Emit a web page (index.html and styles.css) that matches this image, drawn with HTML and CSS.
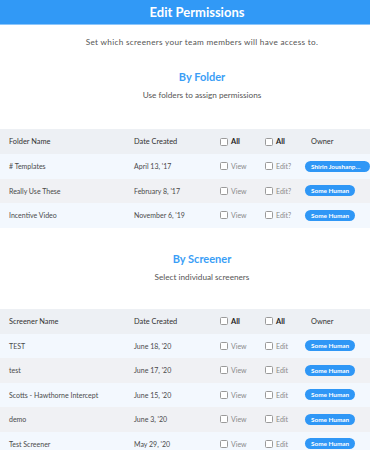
FILE: index.html
```html
<!DOCTYPE html>
<html lang="en">
<head>
  <meta charset="UTF-8" />
  <title>Edit Permissions</title>
  <link rel="stylesheet" href="styles.css">
</head>
<body>
  <div class="topbar">
    <h1>Edit Permissions</h1>
  </div>

  <p class="intro">Set which screeners your team members will have access to.</p>

  <div class="section">
    <h2>By Folder</h2>
    <p class="hint">Use folders to assign permissions</p>
  </div>

  <div class="table folders">
    <div class="row head">
      <span>Folder Name</span>
      <span>Date Created</span>
      <label class="check"><i class="box"></i>All</label>
      <label class="check"><i class="box"></i>All</label>
      <span class="owner-head">Owner</span>
    </div>
    <div class="row">
      <span># Templates</span>
      <span>April 13, '17</span>
      <label class="check"><i class="box"></i>View</label>
      <label class="check"><i class="box"></i>Edit?</label>
      <span class="pill">Shirin Joushanpour</span>
    </div>
    <div class="row">
      <span>Really Use These</span>
      <span>February 8, '17</span>
      <label class="check"><i class="box"></i>View</label>
      <label class="check"><i class="box"></i>Edit?</label>
      <span class="pill">Some Human</span>
    </div>
    <div class="row">
      <span>Incentive Video</span>
      <span>November 6, '19</span>
      <label class="check"><i class="box"></i>View</label>
      <label class="check"><i class="box"></i>Edit?</label>
      <span class="pill">Some Human</span>
    </div>
  </div>

  <div class="section second">
    <h2>By Screener</h2>
    <p class="hint">Select individual screeners</p>
  </div>

  <div class="table screeners">
    <div class="row head">
      <span>Screener Name</span>
      <span>Date Created</span>
      <label class="check"><i class="box"></i>All</label>
      <label class="check"><i class="box"></i>All</label>
      <span class="owner-head">Owner</span>
    </div>
    <div class="row">
      <span>TEST</span>
      <span>June 18, '20</span>
      <label class="check"><i class="box"></i>View</label>
      <label class="check"><i class="box"></i>Edit</label>
      <span class="pill">Some Human</span>
    </div>
    <div class="row">
      <span>test</span>
      <span>June 17, '20</span>
      <label class="check"><i class="box"></i>View</label>
      <label class="check"><i class="box"></i>Edit</label>
      <span class="pill">Some Human</span>
    </div>
    <div class="row">
      <span>Scotts - Hawthorne Intercept</span>
      <span>June 15, '20</span>
      <label class="check"><i class="box"></i>View</label>
      <label class="check"><i class="box"></i>Edit</label>
      <span class="pill">Some Human</span>
    </div>
    <div class="row">
      <span>demo</span>
      <span>June 3, '20</span>
      <label class="check"><i class="box"></i>View</label>
      <label class="check"><i class="box"></i>Edit</label>
      <span class="pill">Some Human</span>
    </div>
    <div class="row">
      <span>Test Screener</span>
      <span>May 29, '20</span>
      <label class="check"><i class="box"></i>View</label>
      <label class="check"><i class="box"></i>Edit</label>
      <span class="pill">Some Human</span>
    </div>
  </div>
</body>
</html>
```

FILE: styles.css
```css
body {
  margin: 0;
  padding: 0;
  background: #fff;
  color: #444;
  font-family: Lato, 'Noto Sans', sans-serif;
  overflow: hidden;
}
.topbar {
  height: 24px;
  background: #3199f6;
  border-bottom: 1px solid #8cc6fb;
  display: flex;
  align-items: center;
  justify-content: center;
  padding-left: 24px;
}
.topbar h1 {
  margin: 0;
  color: #fff;
  font-size: 13px;
  font-weight: 700;
}
.intro {
  margin: 12px 0 0;
  padding-left: 34px;
  text-align: center;
  font-size: 8.2px;
  letter-spacing: 0.3px;
  color: #555;
}
.section {
  padding-left: 34px;
  text-align: center;
  margin-top: 23px;
}
.section h2 {
  margin: 0;
  color: #3a9ef6;
  font-size: 11px;
  font-weight: 700;
}
.hint {
  margin: 7px 0 0;
  font-size: 8.2px;
  color: #555;
}
.table {
  margin-top: 29px;
}
.section.second {
  margin-top: 24px;
}
.table.screeners {
  margin-top: 27px;
}
.row {
  display: grid;
  grid-template-columns: 125px 86px 45px 40px 1fr;
  align-items: center;
  height: 24.5px;
  padding-left: 9px;
  font-size: 7px;
  color: #4a4a4a;
  background: #f3f8fe;
}
.row:nth-child(odd) {
  background: #f0f1f4;
}
.row.head {
  height: 25px;
  background: #edf0f4;
  color: #333;
  font-size: 7.4px;
}
.check {
  display: flex;
  align-items: center;
  gap: 3px;
  color: #8a8a8a;
}
.head .check {
  color: #222;
  font-weight: 700;
}
.box {
  display: inline-block;
  width: 6px;
  height: 6px;
  border: 1px solid #9a9a9a;
  border-radius: 1.5px;
  background: #fff;
}
.owner-head {
  padding-left: 6px;
}
.pill {
  justify-self: start;
  max-width: 53px;
  padding: 0 6px;
  height: 11px;
  line-height: 11px;
  border-radius: 6px;
  background: #2f97f6;
  color: #fff;
  font-size: 6.4px;
  font-weight: 700;
  white-space: nowrap;
  overflow: hidden;
  text-overflow: ellipsis;
}
```
